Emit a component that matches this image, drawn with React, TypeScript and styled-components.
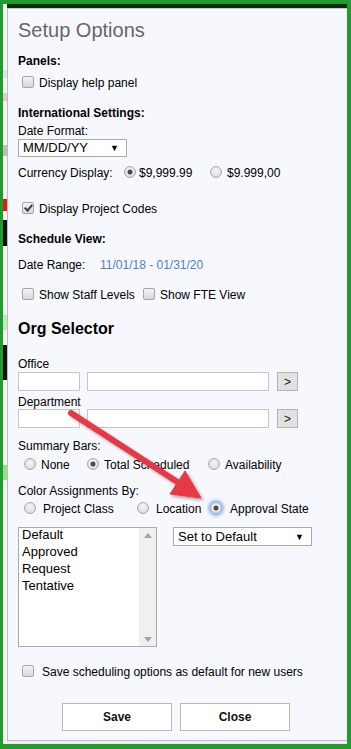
import React from 'react'
import styled, { createGlobalStyle } from 'styled-components'

const GlobalStyle = createGlobalStyle`
    html, body {
        margin: 0;
        padding: 0;
    }
    body {
        background: #219b30;
        font-family: "Liberation Sans", Arial, sans-serif;
    }
`

const Page = styled.div`
    position: relative;
    width: 351px;
    height: 749px;
`
const Frame = styled.div`
    width: 351px;
    height: 749px;
    box-sizing: border-box;
    border-style: solid;
    border-color: #219b30;
    border-width: 4px 4px 5px 3px;
    display: flex;
    overflow: hidden;
`
const Backdrop = styled.div`
    width: 4px;
    flex: none;
    display: flex;
    flex-direction: column;
    background: #f4f4f4;
`
const BackdropBit = styled.div<{ $h: number; $c: string }>`
    height: ${p => p.$h}px;
    flex: none;
    background: ${p => p.$c};
`
const Main = styled.div`
    flex: 1;
    display: flex;
    flex-direction: column;
`
const TopBar = styled.div`
    height: 4px;
    flex: none;
    background: #0c2b0d;
`
const BottomStrip = styled.div`
    height: 3px;
    flex: none;
    background: #ececec;
`
const Dialog = styled.div`
    flex: 1;
    display: flex;
    flex-direction: column;
    background: #f7f8fd;
    border-top: 1px solid #c6c6ca;
    border-left: 1px solid #bdbdbd;
    border-bottom: 1px solid #bdbdbd;
    padding: 0 0 0 10px;
    font-size: 12px;
    line-height: 14px;
    color: #000;
`
const Title = styled.div`
    margin-top: 9px;
    font-size: 20px;
    line-height: 24px;
    color: #66666e;
`
const Section = styled.div<{ $mt: number }>`
    margin-top: ${p => p.$mt}px;
    font-weight: bold;
`
const OrgTitle = styled.div<{ $mt: number }>`
    margin-top: ${p => p.$mt}px;
    font-size: 16px;
    line-height: 19px;
    font-weight: bold;
`
const Label = styled.div<{ $mt: number }>`
    margin-top: ${p => p.$mt}px;
`
const Row = styled.div<{ $mt: number }>`
    margin-top: ${p => p.$mt}px;
    height: 14px;
    display: flex;
    align-items: center;
    white-space: nowrap;
`
const Cell = styled.span<{ $w?: number }>`
    display: inline-flex;
    align-items: center;
    flex: none;
    width: ${p => (p.$w ? `${p.$w}px` : 'auto')};
`
const DateText = styled.span`
    color: #4f7fc0;
`
const Check = styled.input.attrs({ type: 'checkbox' })<{ $ml?: number; $mr?: number }>`
    appearance: none;
    -webkit-appearance: none;
    position: relative;
    flex: none;
    box-sizing: border-box;
    width: 12px;
    height: 12px;
    margin: 0 ${p => p.$mr ?? 5}px 2px ${p => p.$ml ?? 4}px;
    border: 1px solid #a6a6a6;
    border-radius: 2px;
    background: linear-gradient(#f3f3f3, #d8d8d8);
    &:checked::after {
        content: '';
        position: absolute;
        left: 3px;
        top: 0px;
        width: 3px;
        height: 6px;
        border: solid #3c3c3c;
        border-width: 0 2px 2px 0;
        transform: rotate(40deg);
    }
`
const Radio = styled.input.attrs({ type: 'radio' })<{ $ml: number; $mr: number; $mb?: number; $focus?: boolean }>`
    appearance: none;
    -webkit-appearance: none;
    flex: none;
    box-sizing: border-box;
    width: 12px;
    height: 12px;
    margin: 0 ${p => p.$mr}px ${p => p.$mb ?? 3}px ${p => p.$ml}px;
    border: 1px solid #a8a8a8;
    border-radius: 50%;
    background: radial-gradient(circle at 50% 35%, #f6f6f6, #d5d5d5);
    box-shadow: ${p => (p.$focus ? '0 0 3px 2px rgba(105, 165, 240, 0.75)' : 'none')};
    &:checked {
        background: radial-gradient(circle, #4c4c4c 0 2.2px, transparent 2.8px),
            radial-gradient(circle at 50% 35%, #f6f6f6, #d5d5d5);
    }
`
const SelectBox = styled.div<{ $mt?: number; $w: number; $h: number }>`
    margin-top: ${p => p.$mt ?? 0}px;
    width: ${p => p.$w}px;
    height: ${p => p.$h}px;
    box-sizing: border-box;
    flex: none;
    display: flex;
    align-items: center;
    justify-content: space-between;
    padding: 0 7px 0 4px;
    background: #fff;
    border: 1px solid #a9a9a9;
    font-size: 13px;
    & span:last-child {
        font-size: 9px;
    }
`
const InputRow = styled.div<{ $mt: number }>`
    margin-top: ${p => p.$mt}px;
    display: flex;
`
const TextBox = styled.input<{ $w: number; $mr: number }>`
    width: ${p => p.$w}px;
    height: 19px;
    box-sizing: border-box;
    margin: 0 ${p => p.$mr}px 0 0;
    padding: 0;
    border: 1px solid #c6c6c6;
    background: #fff;
`
const GoButton = styled.button`
    width: 21px;
    height: 19px;
    padding: 0;
    border: 1px solid #b3b3b3;
    background: #e1e1e1;
    font: 12px "Liberation Sans", Arial, sans-serif;
    color: #111;
`
const ListRow = styled.div<{ $mt: number }>`
    margin-top: ${p => p.$mt}px;
    display: flex;
    align-items: flex-start;
    gap: 16px;
`
const ListBox = styled.div`
    width: 139px;
    height: 120px;
    box-sizing: border-box;
    border: 1px solid #a9a9a9;
    background: #fff;
    display: flex;
`
const ListItems = styled.div`
    flex: 1;
    padding-left: 3px;
    font-size: 13px;
`
const ListItem = styled.div`
    height: 17px;
    line-height: 14px;
`
const ScrollTrack = styled.div`
    width: 17px;
    background: #f0f0f0;
    display: flex;
    flex-direction: column;
    justify-content: space-between;
    align-items: center;
    padding: 5px 0 4px;
    box-sizing: border-box;
`
const ButtonRow = styled.div<{ $mt: number }>`
    margin-top: ${p => p.$mt}px;
    padding-left: 44px;
    display: flex;
    gap: 8px;
`
const Button = styled.button`
    width: 110px;
    height: 28px;
    padding: 0;
    background: #fff;
    border: 1px solid #b8b8b8;
    font: bold 12px "Liberation Sans", Arial, sans-serif;
    color: #111;
`
const Overlay = styled.svg`
    position: absolute;
    left: 0;
    top: 0;
    pointer-events: none;
`

const backdropBits = [
    { h: 66, c: '#f4f4f4' },
    { h: 8, c: '#d9e4f2' },
    { h: 15, c: '#f4f4f4' },
    { h: 8, c: '#e9c6c6' },
    { h: 44, c: '#f4f4f4' },
    { h: 11, c: '#bdbdbd' },
    { h: 43, c: '#f4f4f4' },
    { h: 12, c: '#e21a1a' },
    { h: 9, c: '#f4f4f4' },
    { h: 26, c: '#111' },
    { h: 69, c: '#f4f4f4' },
    { h: 15, c: '#b8f0b8' },
    { h: 15, c: '#f4f4f4' },
    { h: 35, c: '#111' },
    { h: 85, c: '#f4f4f4' },
    { h: 15, c: '#8fe08f' },
]

const Arrow = () => (
    <Overlay width="351" height="749" viewBox="0 0 351 749">
        <defs>
            <filter id="shadow" x="-20%" y="-20%" width="140%" height="140%">
                <feDropShadow dx="2" dy="2" stdDeviation="1.5" floodColor="#000" floodOpacity="0.35" />
            </filter>
        </defs>
        <g filter="url(#shadow)" fill="#e63946" stroke="#e63946">
            <line x1="71" y1="413" x2="179" y2="483" strokeWidth="6" strokeLinecap="round" />
            <polygon points="201,498 170,494 185,471" strokeWidth="1" strokeLinejoin="round" />
        </g>
    </Overlay>
)

const App = () => {
    return (
        <Page>
            <GlobalStyle />
            <Frame>
                <Backdrop>
                    {backdropBits.map((b, i) => (
                        <BackdropBit key={i} $h={b.h} $c={b.c} />
                    ))}
                </Backdrop>
                <Main>
                    <TopBar />
                    <Dialog>
                        <Title>Setup Options</Title>
                        <Section $mt={12}>Panels:</Section>
                        <Row $mt={8}>
                            <Check />
                            Display help panel
                        </Row>
                        <Section $mt={16}>International Settings:</Section>
                        <Label $mt={4}>Date Format:</Label>
                        <SelectBox $mt={1} $w={109} $h={18}>
                            <span>MM/DD/YY</span>
                            <span>▼</span>
                        </SelectBox>
                        <Row $mt={9}>
                            <Cell $w={100}>Currency Display:</Cell>
                            <Cell $w={86}>
                                <Radio name="currency" defaultChecked $ml={6} $mr={3} $mb={2} />
                                $9,999.99
                            </Cell>
                            <Cell>
                                <Radio name="currency" $ml={6} $mr={5} $mb={2} />
                                $9.999,00
                            </Cell>
                        </Row>
                        <Row $mt={22}>
                            <Check defaultChecked />
                            Display Project Codes
                        </Row>
                        <Section $mt={16}>Schedule View:</Section>
                        <Row $mt={12}>
                            <Cell $w={82}>Date Range:</Cell>
                            <DateText>11/01/18 - 01/31/20</DateText>
                        </Row>
                        <Row $mt={16}>
                            <Cell $w={121}>
                                <Check />
                                Show Staff Levels
                            </Cell>
                            <Cell>
                                <Check />
                                Show FTE View
                            </Cell>
                        </Row>
                        <OrgTitle $mt={17}>Org Selector</OrgTitle>
                        <Label $mt={19}>Office</Label>
                        <InputRow $mt={1}>
                            <TextBox $w={62} $mr={7} />
                            <TextBox $w={182} $mr={8} />
                            <GoButton>&gt;</GoButton>
                        </InputRow>
                        <Label $mt={4}>Department</Label>
                        <InputRow $mt={0}>
                            <TextBox $w={62} $mr={7} />
                            <TextBox $w={182} $mr={8} />
                            <GoButton>&gt;</GoButton>
                        </InputRow>
                        <Label $mt={11}>Summary Bars:</Label>
                        <Row $mt={5}>
                            <Cell $w={63}>
                                <Radio name="summary" $ml={6} $mr={5} />
                                None
                            </Cell>
                            <Cell $w={121}>
                                <Radio name="summary" defaultChecked $ml={6} $mr={5} />
                                Total Scheduled
                            </Cell>
                            <Cell>
                                <Radio name="summary" $ml={6} $mr={5} />
                                Availability
                            </Cell>
                        </Row>
                        <Label $mt={12}>Color Assignments By:</Label>
                        <Row $mt={4}>
                            <Cell $w={113}>
                                <Radio name="color" $ml={6} $mr={7} />
                                Project Class
                            </Cell>
                            <Cell $w={73}>
                                <Radio name="color" $ml={6} $mr={7} />
                                Location
                            </Cell>
                            <Cell>
                                <Radio name="color" defaultChecked $focus $ml={6} $mr={8} />
                                Approval State
                            </Cell>
                        </Row>
                        <ListRow $mt={11}>
                            <ListBox>
                                <ListItems>
                                    <ListItem>Default</ListItem>
                                    <ListItem>Approved</ListItem>
                                    <ListItem>Request</ListItem>
                                    <ListItem>Tentative</ListItem>
                                </ListItems>
                                <ScrollTrack>
                                    <svg width="8" height="5" viewBox="0 0 8 5">
                                        <path d="M0 5 L4 0 L8 5 Z" fill="#a3a3a3" />
                                    </svg>
                                    <svg width="8" height="5" viewBox="0 0 8 5">
                                        <path d="M0 0 L4 5 L8 0 Z" fill="#a3a3a3" />
                                    </svg>
                                </ScrollTrack>
                            </ListBox>
                            <SelectBox $w={139} $h={19}>
                                <span>Set to Default</span>
                                <span>▼</span>
                            </SelectBox>
                        </ListRow>
                        <Row $mt={18}>
                            <Check $mr={8} />
                            Save scheduling options as default for new users
                        </Row>
                        <ButtonRow $mt={24}>
                            <Button>Save</Button>
                            <Button>Close</Button>
                        </ButtonRow>
                    </Dialog>
                    <BottomStrip />
                </Main>
            </Frame>
            <Arrow />
        </Page>
    )
}

export default App
